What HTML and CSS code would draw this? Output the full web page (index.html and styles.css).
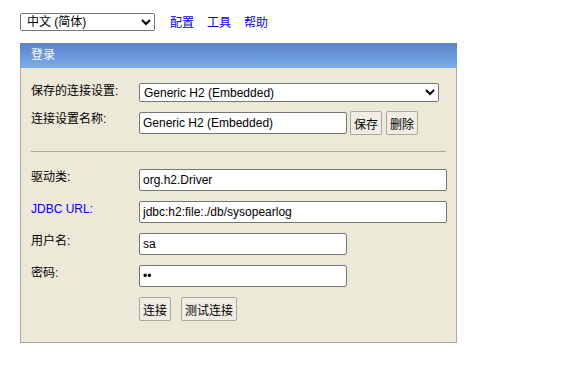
FILE: index.html
```
<!DOCTYPE html>
<html lang="zh">
<head>
<meta charset="utf-8">
<title>H2 Console</title>
<link rel="stylesheet" href="styles.css">
</head>
<body>
<div class="topbar">
  <select class="lang">
    <option>中文 (简体)</option>
  </select>
  <a class="toplink" href="#">配置</a>
  <a class="toplink" href="#">工具</a>
  <a class="toplink" href="#">帮助</a>
</div>
<div class="panel">
  <div class="panel-head">登录</div>
  <div class="panel-body">
    <div class="row row-first">
      <div class="label">保存的连接设置:</div>
      <div class="field">
        <select class="setting">
          <option>Generic H2 (Embedded)</option>
        </select>
      </div>
    </div>
    <div class="row row-name">
      <div class="label">连接设置名称:</div>
      <div class="field field-inline">
        <input class="input short name-input" type="text" value="Generic H2 (Embedded)">
        <button class="btn">保存</button>
        <button class="btn">删除</button>
      </div>
    </div>
    <div class="divider"></div>
    <div class="row">
      <div class="label">驱动类:</div>
      <div class="field"><input class="input long" type="text" value="org.h2.Driver"></div>
    </div>
    <div class="row">
      <div class="label label-link">JDBC URL:</div>
      <div class="field"><input class="input long" type="text" value="jdbc:h2:file:./db/sysopearlog"></div>
    </div>
    <div class="row">
      <div class="label">用户名:</div>
      <div class="field"><input class="input short" type="text" value="sa"></div>
    </div>
    <div class="row">
      <div class="label">密码:</div>
      <div class="field"><input class="input short" type="password" value="sa"></div>
    </div>
    <div class="row">
      <div class="label"></div>
      <div class="field field-buttons">
        <button class="btn">连接</button>
        <button class="btn">测试连接</button>
      </div>
    </div>
  </div>
</div>
</body>
</html>
```
FILE: styles.css
```
html, body {
  margin: 0;
  padding: 0;
  background: #ffffff;
}
body {
  font-family: "Liberation Sans", "Noto Sans CJK SC", Arial, sans-serif;
  font-size: 12px;
  color: #000;
  padding: 13px 0 0 20px;
}
.topbar {
  display: flex;
  align-items: center;
  height: 18px;
}
.lang {
  width: 135px;
  height: 18px;
  font-family: "Liberation Sans", "Noto Sans CJK SC", sans-serif;
  font-size: 12px;
  margin: 0 15px 0 0;
  padding: 0 0 0 2px;
}
.toplink {
  color: #0000ff;
  text-decoration: none;
  margin-right: 13px;
  line-height: 18px;
  position: relative;
  top: 1px;
}
.panel {
  margin-top: 12px;
  width: 435px;
  border: 1px solid #aca899;
  border-top: none;
  background: #ece9d8;
}
.panel-head {
  height: 25px;
  line-height: 25px;
  padding-left: 11px;
  margin-left: -1px;
  margin-right: -1px;
  color: #ffffff;
  background: linear-gradient(#5883c8, #7cadec);
}
.panel-body {
  padding: 10px 10px 16px 10px;
}
.row {
  display: flex;
  padding: 5px 0;
}
.row-name {
  padding: 4px 0 5px;
}
.label {
  width: 108px;
  flex: none;
  line-height: 14px;
  padding-top: 1px;
}
.label-link {
  color: #0000ff;
}
.field {
  flex: 1;
}
.field-inline {
  display: flex;
  align-items: flex-start;
}
.field-buttons {
  display: flex;
  gap: 10px;
}
.setting {
  width: 300px;
  height: 19px;
  font-family: "Liberation Sans", sans-serif;
  font-size: 12px;
  padding: 0;
  margin: 0;
}
.input {
  box-sizing: border-box;
  height: 22px;
  border: 1px solid #767676;
  border-radius: 2px;
  padding: 1px 3px;
  font-family: "Liberation Sans", sans-serif;
  font-size: 12px;
  margin: 0;
  background: #fff;
}
.long {
  width: 308px;
}
.short {
  width: 208px;
}
.name-input {
  margin-top: 1px;
  margin-right: 3px;
}
.btn {
  box-sizing: border-box;
  height: 24px;
  padding: 0 3px;
  margin: 0 4px 0 0;
  font-family: "Noto Sans CJK SC", sans-serif;
  font-size: 12px;
  background: #efede4;
  border: 1px solid #aca899;
  border-radius: 2px;
  color: #000;
}
.field-buttons .btn {
  margin: 0;
}
.divider {
  height: 1px;
  background: #aca899;
  margin: 11px 0 12px;
}
```
